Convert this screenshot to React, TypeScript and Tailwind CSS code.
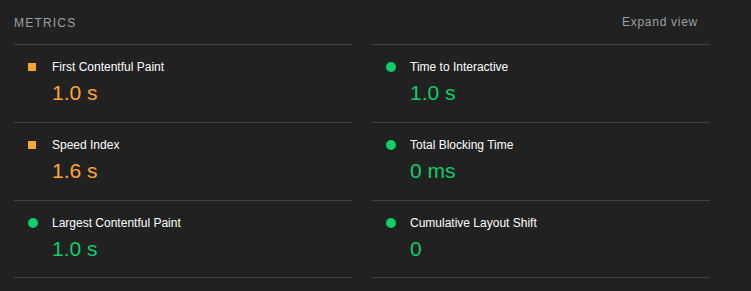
import React from "react";

type Metric = { title: string; value: string; status: "avg" | "pass" };

const left: Metric[] = [
  { title: "First Contentful Paint", value: "1.0 s", status: "avg" },
  { title: "Speed Index", value: "1.6 s", status: "avg" },
  { title: "Largest Contentful Paint", value: "1.0 s", status: "pass" },
];
const right: Metric[] = [
  { title: "Time to Interactive", value: "1.0 s", status: "pass" },
  { title: "Total Blocking Time", value: "0 ms", status: "pass" },
  { title: "Cumulative Layout Shift", value: "0", status: "pass" },
];

function Row({ m, last }: { m: Metric; last: boolean }) {
  const avg = m.status === "avg";
  return (
    <div
      className={
        "border-t border-[#424242] pt-[14px] " +
        (last ? "border-b pb-[14px]" : "pb-[15px]")
      }
    >
      <div className="flex items-center h-[16px] pl-[14px]">
        <div className="w-[24px] flex items-center">
          {avg ? (
            <div className="w-[8px] h-[8px] bg-[#ffa632]" />
          ) : (
            <div className="w-[10px] h-[10px] rounded-full bg-[#0cce6b]" />
          )}
        </div>
        <span className="text-[12px] leading-[16px] text-white">{m.title}</span>
      </div>
      <div
        className={
          "mt-[4px] pl-[38px] text-[21px] leading-[28px] " +
          (avg ? "text-[#ffa632]" : "text-[#0cce6b]")
        }
      >
        {m.value}
      </div>
    </div>
  );
}

export default function App() {
  return (
    <div
      className="w-[751px] h-[291px] bg-[#212121] pl-[14px]"
      style={{ fontFamily: '"Liberation Sans", Arial, sans-serif' }}
    >
      <div className="w-[696px] flex items-end justify-between h-[44px] pb-[16px] pr-[12px]">
        <span className="text-[12px] leading-[14px] tracking-[0.1em] text-[#9aa0a6] relative top-[2px]">
          METRICS
        </span>
        <span className="text-[12px] leading-[14px] tracking-[0.06em] text-[#9aa0a6] relative top-[1px]">
          Expand view
        </span>
      </div>
      <div className="grid grid-cols-[338px_338px] gap-x-[20px]">
        <div>
          {left.map((m, i) => (
            <Row key={m.title} m={m} last={i === left.length - 1} />
          ))}
        </div>
        <div>
          {right.map((m, i) => (
            <Row key={m.title} m={m} last={i === right.length - 1} />
          ))}
        </div>
      </div>
    </div>
  );
}
